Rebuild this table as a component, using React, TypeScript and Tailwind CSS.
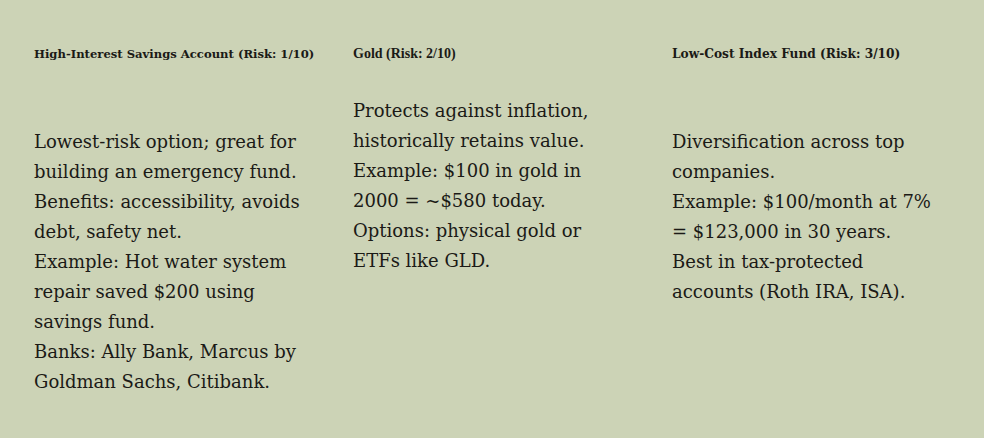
import React from 'react';

type Option = {
  title: string;
  titleClass: string;
  lines: string[];
  offset: string;
};

const options: Option[] = [
  {
    title: 'High-Interest Savings Account (Risk: 1/10)',
    titleClass: "font-['DejaVu_Serif',serif] text-[11.6px]",
    offset: 'mt-[63px]',
    lines: [
      'Lowest-risk option; great for',
      'building an emergency fund.',
      'Benefits: accessibility, avoids',
      'debt, safety net.',
      'Example: Hot water system',
      'repair saved $200 using',
      'savings fund.',
      'Banks: Ally Bank, Marcus by',
      'Goldman Sachs, Citibank.',
    ],
  },
  {
    title: 'Gold (Risk: 2/10)',
    titleClass: "font-['Liberation_Serif',serif] text-[14px]",
    offset: 'mt-[32px]',
    lines: [
      'Protects against inflation,',
      'historically retains value.',
      'Example: $100 in gold in',
      '2000 = ~$580 today.',
      'Options: physical gold or',
      'ETFs like GLD.',
    ],
  },
  {
    title: 'Low-Cost Index Fund (Risk: 3/10)',
    titleClass: "font-['DejaVu_Serif',serif] text-[12.2px]",
    offset: 'mt-[63px]',
    lines: [
      'Diversification across top',
      'companies.',
      'Example: $100/month at 7%',
      '= $123,000 in 30 years.',
      'Best in tax-protected',
      'accounts (Roth IRA, ISA).',
    ],
  },
];

const App: React.FC = () => {
  return (
    <div className="w-[984px] h-[438px] bg-[#ccd3b6] text-[#1b1a16] font-['DejaVu_Serif',serif] pl-[34px] pt-[44px] overflow-hidden">
      <div className="grid grid-cols-[287px_287px_287px] gap-x-[32px]">
        {options.map((opt) => (
          <div key={opt.title}>
            {/* Card heading */}
            <h3 className={`${opt.titleClass} leading-[20px] font-bold`}>{opt.title}</h3>
            <p className={`${opt.offset} text-[18px] leading-[30px]`}>
              {opt.lines.map((line, i) => (
                <span key={i} className="block whitespace-nowrap">
                  {line}
                </span>
              ))}
            </p>
          </div>
        ))}
      </div>
    </div>
  );
};

export default App;
